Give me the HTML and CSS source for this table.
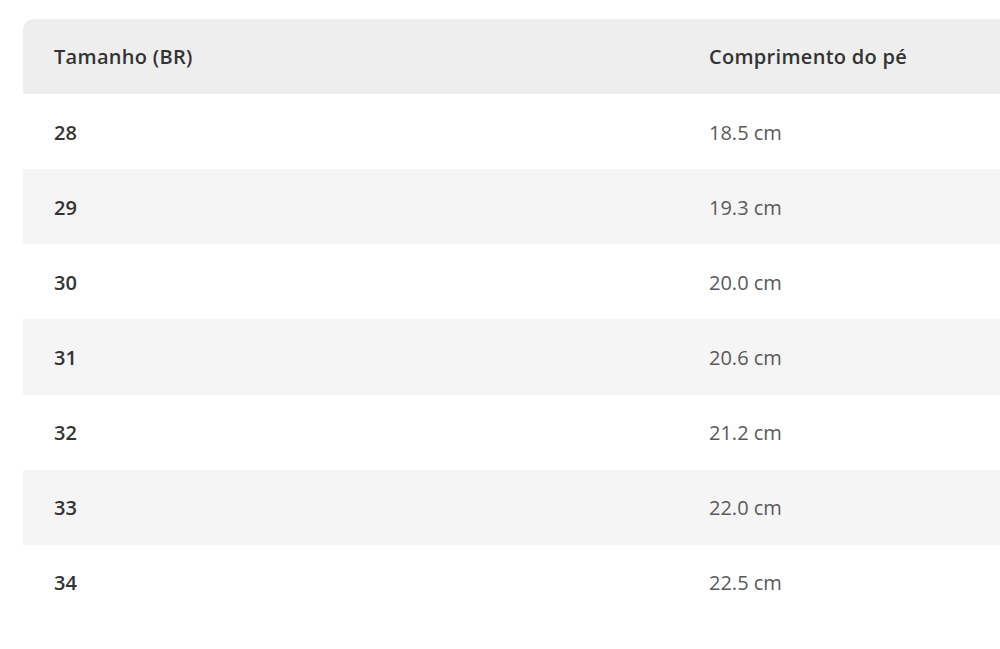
FILE: index.html
```html
<!DOCTYPE html>
<html lang="pt-BR">
<head>
<meta charset="utf-8">
<title>Tabela de tamanhos</title>
<link rel="stylesheet" href="styles.css">
</head>
<body>
<div class="table">
  <div class="row head">
    <div class="cell">Tamanho (BR)</div>
    <div class="cell">Comprimento do pé</div>
  </div>
  <div class="row"><div class="cell size">28</div><div class="cell len">18.5 cm</div></div>
  <div class="row alt"><div class="cell size">29</div><div class="cell len">19.3 cm</div></div>
  <div class="row"><div class="cell size">30</div><div class="cell len">20.0 cm</div></div>
  <div class="row alt"><div class="cell size">31</div><div class="cell len">20.6 cm</div></div>
  <div class="row"><div class="cell size">32</div><div class="cell len">21.2 cm</div></div>
  <div class="row alt"><div class="cell size">33</div><div class="cell len">22.0 cm</div></div>
  <div class="row"><div class="cell size">34</div><div class="cell len">22.5 cm</div></div>
</div>
</body>
</html>
```

FILE: styles.css
```css
html, body {
  margin: 0;
  padding: 0;
  background: #ffffff;
  overflow: hidden;
}
body {
  padding: 19px 0 0 23px;
  font-family: "Open Sans", "Liberation Sans", sans-serif;
  font-size: 20px;
  color: #333333;
}
.table {
  width: 1310px;
  display: flex;
  flex-direction: column;
}
.row {
  display: grid;
  grid-template-columns: 655px 655px;
  height: 75.15px;
  align-items: center;
}
.head {
  height: 75px;
  background: #eeeeee;
  border-top-left-radius: 10px;
  font-weight: 600;
  letter-spacing: 0.3px;
  color: #333333;
}
.alt {
  background: #f5f5f5;
}
.cell {
  padding-left: 31px;
  padding-top: 1px;
}
.head .cell {
  padding-top: 0;
}
.size {
  font-weight: 600;
  color: #333333;
}
.len {
  color: #5a5a5a;
}
```
